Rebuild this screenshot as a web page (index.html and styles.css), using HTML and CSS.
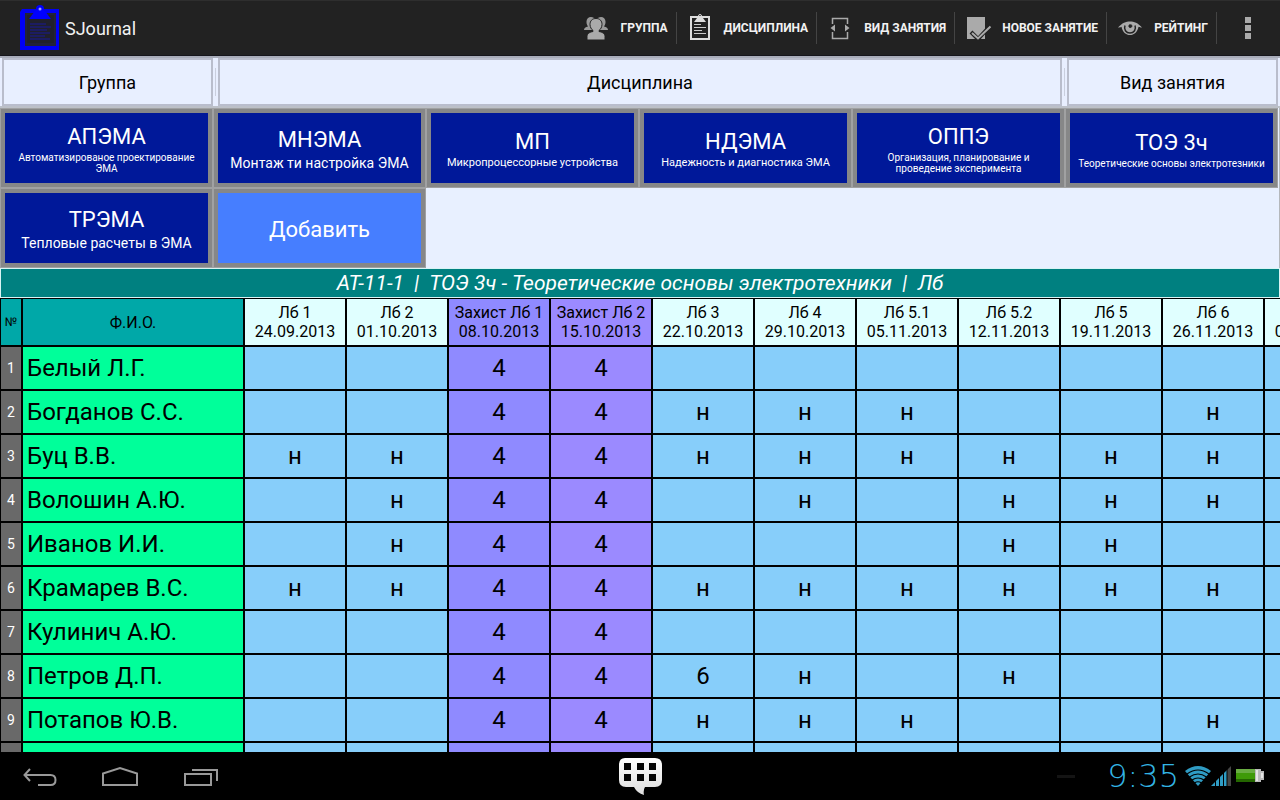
FILE: index.html
```html
<!DOCTYPE html>
<html lang="ru">
<head>
<meta charset="utf-8">
<title>SJournal</title>
<link rel="stylesheet" href="styles.css">
</head>
<body>
<div class="screen">
  <header class="action-bar">
    <div class="brand">
      <svg class="logo" viewBox="0 0 42 48" aria-hidden="true">
        <path d="M3 5h37v41H1V8z" fill="#0000f5"/>
        <path d="M6 9h31v33H6z" fill="#22223a"/>
        <path d="M8 11h27v28H8z" fill="#20202c"/>
        <path d="M11 20h16M11 23h21M11 26h17M11 29h20M11 32h15M11 35h20" stroke="#1c1c62" stroke-width="2"/>
        <path d="M10 15l6-8h10l6 8z" fill="#0000ff"/>
        <circle cx="21" cy="5" r="4" fill="#0000ff"/>
        <circle cx="21" cy="5" r="1.500" fill="#9a9aff"/>
      </svg>
      <h1 class="app-name">SJournal</h1>
    </div>
    <nav class="actions">
      <button class="action">
        <svg viewBox="0 0 32 32" aria-hidden="true">
          <path d="M11 5c2 0 3 .8 3.500 2v11H4c0-2 1.500-3 4-3.500C6.500 12.500 6.500 11 6.500 9.500 6.500 7 8.500 5 11 5zM21 5c-2 0-3 .8-3.500 2v11H28c0-2-1.500-3-4-3.500 1.500-2 1.500-3.500 1.500-5C25.500 7 23.500 5 21 5z" fill="#999"/>
          <path d="M16 6.500c4 0 6 2.500 6 6 0 2.500-1.500 5-3 6v1c4 .8 6 2.500 6 5V28H7v-3.500c0-2.500 2-4.200 6-5v-1c-1.500-1-3-3.500-3-6 0-3.500 2-6 6-6z" fill="#aaa" stroke="#222" stroke-width="1"/>
        </svg>
        <span>ГРУППА</span>
      </button>
      <button class="action">
        <svg viewBox="0 0 32 32" aria-hidden="true">
          <path d="M7 5h18v22H7z" fill="none" stroke="#ddd" stroke-width="2"/>
          <path d="M10 10l3-4h6l3 4z" fill="#ddd"/>
          <circle cx="16" cy="4" r="1.500" fill="none" stroke="#ddd"/>
          <path d="M10 12.500h7M10 15.500h12M10 18.500h8M10 21.500h12" stroke="#ccc"/>
        </svg>
        <span>ДИСЦИПЛИНА</span>
      </button>
      <button class="action">
        <svg viewBox="0 0 32 32" aria-hidden="true">
          <path d="M8.500 12V6.500h15V12M8.500 20v6.500h15V20" fill="none" stroke="#aaa" stroke-width="1.500"/>
          <path d="M11 12.500v7L6.500 16zM21 12.500v7l4.500-3.500z" fill="#aaa"/>
        </svg>
        <span>ВИД ЗАНЯТИЯ</span>
      </button>
      <button class="action">
        <svg viewBox="0 0 32 32" aria-hidden="true">
          <path d="M5 5h18v22H5z" fill="#aaa"/>
          <path d="M9 20l7 7L28 14" fill="none" stroke="#222" stroke-width="4"/>
          <path d="M10 21l6 5.500L28.500 14.500" fill="none" stroke="#aaa" stroke-width="2"/>
        </svg>
        <span>НОВОЕ ЗАНЯТИЕ</span>
      </button>
      <button class="action">
        <svg viewBox="0 0 32 32" aria-hidden="true">
          <path d="M4 15.500C8 11 12 9.500 16 9.500s8 1.500 12 6c-1.500 0-2.500-.2-3.500-.8-1 5.500-4.500 8.300-8.500 8.300s-7.500-2.800-8.500-8.300c-1 .6-2 .8-3.500.8z" fill="#aaa"/>
          <path d="M11 13.500c-1.500 4 1 7.500 5 7.500s6.500-3.500 5-7.500" fill="none" stroke="#222" stroke-width="1.500"/>
          <path d="M16 12.500c-2 1-1 3.500.7 3 1.500-.4 1.500-2 .3-3" fill="#222" stroke="#222"/>
        </svg>
        <span>РЕЙТИНГ</span>
      </button>
      <button class="overflow" aria-label="Меню">
        <svg viewBox="0 0 32 32" aria-hidden="true"><path d="M13 5h6v6h-6zM13 13h6v6h-6zM13 21h6v6h-6z" fill="#aaa"/></svg>
      </button>
    </nav>
  </header>

  <div class="tabs">
    <button class="tab">Группа</button>
    <span class="tab-divider"></span>
    <button class="tab">Дисциплина</button>
    <span class="tab-divider"></span>
    <button class="tab">Вид занятия</button>
  </div>

  <section class="tiles">
    <button class="tile"><b>АПЭМА</b><small class="fine">Автоматизированое проектирование ЭМА</small></button>
    <button class="tile"><b>МНЭМА</b><small>Монтаж ти настройка ЭМА</small></button>
    <button class="tile"><b>МП</b><small class="medium">Микропроцессорные устройства</small></button>
    <button class="tile"><b>НДЭМА</b><small class="medium">Надежность и диагностика ЭМА</small></button>
    <button class="tile"><b>ОППЭ</b><small class="fine">Организация, планирование и проведение эксперимента</small></button>
    <button class="tile"><b>ТОЭ 3ч</b><small class="fine">Теоретические основы электротезники</small></button>
    <button class="tile"><b>ТРЭМА</b><small>Тепловые расчеты в ЭМА</small></button>
    <button class="tile add"><b>Добавить</b></button>
  </section>

  <h2 class="title">АТ-11-1&nbsp; |&nbsp; ТОЭ 3ч - Теоретические основы электротехники&nbsp; |&nbsp; Лб</h2>

  <main class="journal">
    <table class="grid">
      <colgroup><col class="c-num"><col class="c-name"><col span="11" class="c-day"></colgroup>
      <thead>
        <tr>
          <th class="num-head">№</th><th class="name-head">Ф.И.О.</th>
          <th>Лб 1<br>24.09.2013</th><th>Лб 2<br>01.10.2013</th>
          <th class="d1">Захист Лб 1<br>08.10.2013</th><th class="d2">Захист Лб 2<br>15.10.2013</th>
          <th>Лб 3<br>22.10.2013</th><th>Лб 4<br>29.10.2013</th><th>Лб 5.1<br>05.11.2013</th>
          <th>Лб 5.2<br>12.11.2013</th><th>Лб 5<br>19.11.2013</th><th>Лб 6<br>26.11.2013</th><th><br>03.12.2013</th>
        </tr>
      </thead>
      <tbody>
        <tr><td class="num">1</td><td class="name">Белый Л.Г.</td><td></td><td></td><td class="d1">4</td><td class="d2">4</td><td></td><td></td><td></td><td></td><td></td><td></td><td></td></tr>
        <tr><td class="num">2</td><td class="name">Богданов С.С.</td><td></td><td></td><td class="d1">4</td><td class="d2">4</td><td>н</td><td>н</td><td>н</td><td></td><td></td><td>н</td><td></td></tr>
        <tr><td class="num">3</td><td class="name">Буц В.В.</td><td>н</td><td>н</td><td class="d1">4</td><td class="d2">4</td><td>н</td><td>н</td><td>н</td><td>н</td><td>н</td><td>н</td><td></td></tr>
        <tr><td class="num">4</td><td class="name">Волошин А.Ю.</td><td></td><td>н</td><td class="d1">4</td><td class="d2">4</td><td></td><td>н</td><td></td><td>н</td><td>н</td><td>н</td><td></td></tr>
        <tr><td class="num">5</td><td class="name">Иванов И.И.</td><td></td><td>н</td><td class="d1">4</td><td class="d2">4</td><td></td><td></td><td></td><td>н</td><td>н</td><td></td><td></td></tr>
        <tr><td class="num">6</td><td class="name">Крамарев В.С.</td><td>н</td><td>н</td><td class="d1">4</td><td class="d2">4</td><td>н</td><td>н</td><td>н</td><td>н</td><td>н</td><td>н</td><td></td></tr>
        <tr><td class="num">7</td><td class="name">Кулинич А.Ю.</td><td></td><td></td><td class="d1">4</td><td class="d2">4</td><td></td><td></td><td></td><td></td><td></td><td></td><td></td></tr>
        <tr><td class="num">8</td><td class="name">Петров Д.П.</td><td></td><td></td><td class="d1">4</td><td class="d2">4</td><td>6</td><td>н</td><td></td><td>н</td><td></td><td></td><td></td></tr>
        <tr><td class="num">9</td><td class="name">Потапов Ю.В.</td><td></td><td></td><td class="d1">4</td><td class="d2">4</td><td>н</td><td>н</td><td>н</td><td></td><td></td><td>н</td><td></td></tr>
        <tr><td class="num"></td><td class="name"></td><td></td><td></td><td class="d1"></td><td class="d2"></td><td></td><td></td><td></td><td></td><td></td><td></td><td></td></tr>
      </tbody>
    </table>
  </main>

  <footer class="system-bar">
    <div class="sys-left">
      <button aria-label="Назад"><svg viewBox="0 0 40 32" aria-hidden="true"><path d="M10 9L4.500 15l5.500 6M4.500 15h26c3.500 0 5 2 5 5s-1.500 5-5 5H18" fill="none" stroke="#999" stroke-width="2"/></svg></button>
      <button aria-label="Домой"><svg viewBox="0 0 40 32" aria-hidden="true"><path d="M3 25V13.500L20 8l17 5.500V25z" fill="none" stroke="#999" stroke-width="2"/></svg></button>
      <button aria-label="Недавние"><svg viewBox="0 0 40 32" aria-hidden="true"><path d="M5 14h26v11H5zM12 10h25v11" fill="none" stroke="#999" stroke-width="2"/></svg></button>
    </div>
    <button class="bubble" aria-label="Клавиатура">
      <svg viewBox="0 0 44 40" aria-hidden="true">
        <defs><linearGradient id="b" x1="0" y1="0" x2="0" y2="1"><stop offset="0" stop-color="#fff"/><stop offset="1" stop-color="#ddd"/></linearGradient></defs>
        <path d="M7 2h30q7 0 7 7v15q0 7-7 7H27q-2 3-1 8-7-2-10-8H8q-7 0-7-7V9q0-7 6-7z" fill="url(#b)"/>
        <path d="M6 7h7v7H6zM19 7h7v7h-7zM31 7h7v7h-7zM6 18h7v7H6zM19 18h7v7h-7zM31 18h7v7h-7z" fill="#050505"/>
      </svg>
    </button>
    <div class="sys-right">
      <span class="dash"></span>
      <time class="clock">9:35</time>
      <svg class="status" viewBox="0 0 80 24" aria-hidden="true">
        <path d="M0 7Q13-3 26 7L13 22z" fill="#2f9cc4"/>
        <path d="M2 10Q13 2 24 10M4.500 13Q13 7 21.500 13M7 16Q13 12 19 16M9.500 19Q13 16.500 16.500 19" fill="none" stroke="#000" stroke-width="1.200"/>
        <path d="M26 22L42 6v16z" fill="#2f9cc4"/>
        <path d="M42 6l4-4v20h-4z" fill="#444"/>
        <path d="M30.500 2v20M34.500 2v20M38.500 2v20M42 2v20" stroke="#000"/>
        <path d="M51 5h19v13H51z" fill="#3f9a08"/>
        <path d="M51 5h19v4H51z" fill="#69ad42"/>
        <path d="M51 15h19v3H51z" fill="#246600"/>
        <path d="M70 5h6v2h3v9h-3v2h-6z" fill="#bbb"/>
        <path d="M71 6h2v11h-2zM76 9h2v5h-2z" fill="#e5e5e5"/>
      </svg>
    </div>
  </footer>
</div>
</body>
</html>
```
FILE: styles.css
```css
* { box-sizing: border-box; }

body {
  margin: 0;
  font-family: Roboto, "Noto Sans", sans-serif;
  background: #000;
}

button {
  margin: 0;
  padding: 0;
  border: 0;
  background: none;
  color: inherit;
  font: inherit;
  cursor: pointer;
}

.screen {
  display: flex;
  flex-direction: column;
  height: 100vh;
  overflow: hidden;
}

/* Action bar */
.action-bar {
  flex: none;
  display: flex;
  justify-content: space-between;
  height: 56px;
  background: #222;
  border-top: 1px solid #2e2e2e;
  border-bottom: 1px solid #16161c;
  color: #f2f2f2;
}
.brand {
  display: flex;
  align-items: center;
  gap: 4px;
  padding-left: 19px;
}
.logo { width: 42px; height: 48px; }
.app-name { margin: 0; font-size: 18px; font-weight: 400; }

.actions { display: flex; align-items: center; }
.action {
  display: flex;
  align-items: center;
  gap: 8px;
  height: 32px;
  padding: 0 8px 0 7px;
  border-right: 1px solid #444;
  font-size: 12px;
  font-weight: 700;
  white-space: nowrap;
}
.action svg, .overflow svg { display: block; width: 32px; height: 32px; }
.overflow { padding: 0 16px 0 15px; }

/* Tabs */
.tabs {
  flex: none;
  display: grid;
  grid-template-columns: 1fr 1px 4fr 1px 1fr;
  gap: 2px;
  padding: 0 2px;
  background: #e8eeff;
  border-top: 2px solid #a9adba;
  border-bottom: 2px solid #bcc0c8;
}
.tab {
  height: 48px;
  border: 2px solid #b9bdcc;
  background: #e8efff;
  color: #000;
  font-size: 18px;
}
.tab-divider { margin: 10px 0; background: #c9cedd; }

/* Discipline tiles */
.tiles {
  flex: none;
  display: grid;
  grid-template-columns: repeat(6, 1fr);
  padding-right: 1px;
  background: #e8f0ff;
  border-right: 1px solid #b4b8bc;
}
.tile {
  display: flex;
  flex-direction: column;
  align-items: center;
  justify-content: center;
  height: 80px;
  padding: 4px 4px 0;
  background: #001899;
  border: 5px solid #868788;
  outline: 1px solid #a0a1a2;
  outline-offset: -1px;
  color: #fff;
  text-align: center;
}
.tile b { font-size: 22px; line-height: 26px; font-weight: 400; }
.tile small { font-size: 14px; line-height: 20px; }
.tile .medium { font-size: 11px; line-height: 16px; }
.tile .fine { font-size: 10px; line-height: 11px; padding: 2px 0; }
.tile.add { background: #467eff; }

.title {
  flex: none;
  margin: 0;
  border: 1px solid #d8f4f4;
  background: #008080;
  color: #fff;
  font-size: 21px;
  line-height: 28px;
  font-weight: 400;
  font-style: italic;
  text-align: center;
  white-space: nowrap;
}

/* Journal */
.journal {
  flex: 1;
  min-height: 0;
  overflow: auto;
  scrollbar-width: none;
  background: #000;
}
.grid {
  width: max-content;
  table-layout: fixed;
  border-collapse: separate;
  border-spacing: 0;
  border-top: 1px solid #000;
  border-left: 1px solid #000;
  color: #000;
}
.c-num { width: 22px; }
.c-name { width: 222px; }
.c-day { width: 102px; }
.grid th, .grid td {
  padding: 0;
  border-right: 2px solid #000;
  border-bottom: 2px solid #000;
  text-align: center;
  white-space: nowrap;
}
.grid th {
  height: 48px;
  background: #e0ffff;
  font-size: 16px;
  line-height: 19px;
  font-weight: 400;
}
.grid td {
  height: 44px;
  background: #87cefa;
  font-size: 24px;
  line-height: 28px;
}
.grid .num-head { background: #00a8a8; font-size: 12px; }
.grid .name-head { background: #00a8a8; }
.grid .num { background: #696969; color: #fff; font-size: 14px; }
.grid .name { padding-left: 4px; background: #00ff9a; text-align: left; }
.grid .d1 { background: #8f8aff; }
.grid .d2 { background: #9b8aff; }

/* System bar */
.system-bar {
  flex: none;
  display: grid;
  grid-template-columns: 1fr auto 1fr;
  align-items: center;
  height: 48px;
  background: #000;
}
.sys-left { display: flex; gap: 40px; padding-left: 20px; }
.sys-left svg { display: block; width: 40px; height: 32px; }
.bubble svg { display: block; width: 44px; height: 40px; }
.sys-right {
  display: flex;
  align-items: center;
  justify-content: flex-end;
  padding-right: 15px;
}
.dash { width: 18px; height: 3px; margin-right: 32px; background: #141414; }
.clock {
  margin-right: 6px;
  color: #33b5e5;
  font-family: "DejaVu Sans", sans-serif;
  font-size: 32px;
  line-height: 32px;
  font-weight: 200;
}
.status { width: 80px; height: 24px; }
```
